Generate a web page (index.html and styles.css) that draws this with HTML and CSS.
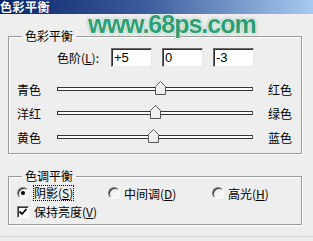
FILE: index.html
```html
<!DOCTYPE html>
<html lang="zh-CN">
<head>
    <meta charset="UTF-8">
    <title>色彩平衡</title>
    <link rel="stylesheet" href="styles.css">
</head>
<body>
    <div class="titlebar"><span class="title">色彩平衡</span></div>
    <div class="watermark">www.68ps.com</div>
    <div class="dialog">
        <fieldset class="group group-color">
            <legend>色彩平衡</legend>
            <div class="levels">
                <label>色阶(<u>L</u>):</label>
                <input class="field" type="text" value="+5">
                <input class="field" type="text" value="0">
                <input class="field" type="text" value="-3">
            </div>
            <div class="slider-row first-slider">
                <span class="side-left">青色</span>
                <div class="track"><span class="thumb" style="left: 97px"></span></div>
                <span class="side-right">红色</span>
            </div>
            <div class="slider-row">
                <span class="side-left">洋红</span>
                <div class="track"><span class="thumb" style="left: 92px"></span></div>
                <span class="side-right">绿色</span>
            </div>
            <div class="slider-row">
                <span class="side-left">黄色</span>
                <div class="track"><span class="thumb" style="left: 90px"></span></div>
                <span class="side-right">蓝色</span>
            </div>
        </fieldset>
        <fieldset class="group group-tone">
            <legend>色调平衡</legend>
            <div class="radios">
                <div class="opt"><span class="radio checked"></span><span class="focus">阴影(<u>S</u>)</span></div>
                <div class="opt"><span class="radio"></span><span>中间调(<u>D</u>)</span></div>
                <div class="opt"><span class="radio"></span><span>高光(<u>H</u>)</span></div>
            </div>
            <div class="opt check-row">
                <span class="checkbox">
                    <svg width="10" height="10" viewBox="0 0 10 10"><path d="M1.5 4.5 L4 7 L8.5 2" fill="none" stroke="#000" stroke-width="1.8"/></svg>
                </span>
                <span>保持亮度(<u>V</u>)</span>
            </div>
        </fieldset>
        <div class="bottom-edge"></div>
    </div>
</body>
</html>
```

FILE: styles.css
```css
body {
    margin: 0;
    background-color: #eeeeee;
    color: #000;
    font-family: "Noto Sans CJK SC", sans-serif;
    font-size: 12px;
    position: relative;
    width: 313px;
    height: 241px;
    overflow: hidden;
}
u {
    text-decoration: underline;
    text-underline-offset: 1px;
}
.titlebar {
    height: 14px;
    background: linear-gradient(to right, #0a246a, #3a5a9a 45%, #a6caf0);
}
.title {
    display: block;
    color: #fff;
    font-weight: bold;
    font-size: 12px;
    line-height: 14px;
    letter-spacing: 0.5px;
}
.watermark {
    position: absolute;
    top: 12px;
    left: 88px;
    font-family: "Liberation Sans", Arial, sans-serif;
    font-weight: bold;
    font-size: 25px;
    line-height: 24px;
    letter-spacing: -1px;
    color: #2f9e74;
    text-shadow: 1px 0 0 #e6f5ee, -1px 0 0 #e6f5ee, 0 1px 0 #e6f5ee, 0 -1px 0 #e6f5ee, 0 0 3px #1f7a55;
}
.dialog {
    padding: 0 11px 0 8px;
}
.group {
    margin: 0;
    padding: 0;
    border: 1px solid #9a9a9a;
    box-shadow: 1px 1px 0 #fff, inset 1px 1px 0 #fff;
    min-width: 0;
}
.group legend {
    margin-left: 13px;
    padding: 0 3px;
    line-height: 14px;
}
.group-color {
    margin-top: 15px;
    padding-bottom: 4px;
}
.group-tone {
    margin-top: 15px;
    padding-bottom: 3px;
}
.levels {
    display: flex;
    align-items: center;
    height: 19px;
    margin-top: 5px;
    padding-left: 48px;
}
.levels label {
    width: 54px;
}
.field {
    box-sizing: border-box;
    width: 41px;
    height: 19px;
    margin: 0 10px 0 0;
    padding: 0 2px;
    border: 1px solid;
    border-color: #6a6a6a #e8e8e8 #e8e8e8 #6a6a6a;
    box-shadow: inset 1px 1px 0 #303030;
    background: #fff;
    font-family: "Liberation Sans", Arial, sans-serif;
    font-size: 13px;
    color: #000;
    outline: none;
}
.slider-row {
    display: flex;
    align-items: center;
    height: 24px;
    padding-left: 8px;
}
.first-slider {
    margin-top: 10px;
}
.side-left {
    width: 40px;
}
.side-right {
    margin-left: 15px;
}
.track {
    position: relative;
    box-sizing: border-box;
    width: 196px;
    height: 4px;
    margin-top: -1px;
    border: 1px solid #333;
    border-right-color: #555;
    background: #fff;
}
.thumb {
    position: absolute;
    top: -7px;
    width: 11px;
    height: 14px;
    background: no-repeat url("data:image/svg+xml,%3Csvg xmlns='http://www.w3.org/2000/svg' width='11' height='14'%3E%3Cpath d='M0.5 13.5 V5.5 L5.5 0.5 L10.5 5.5 V13.5 Z' fill='%23eeeeee' stroke='%23555'/%3E%3Cpath d='M1.5 12.5 V5.9 L5.5 1.9' fill='none' stroke='%23fff'/%3E%3C/svg%3E");
}
.radios {
    display: grid;
    grid-template-columns: 91px 104px auto;
    height: 18px;
    margin-top: 1px;
    padding-left: 8px;
    align-items: center;
}
.opt {
    display: flex;
    align-items: center;
}
.radio {
    box-sizing: border-box;
    width: 12px;
    height: 12px;
    margin-right: 5px;
    border-radius: 50%;
    border: 1px solid;
    border-color: #7a7a7a #fff #fff #7a7a7a;
    box-shadow: inset 1px 1px 0 #333;
    background: #f4f4f4;
    position: relative;
}
.radio.checked::after {
    content: "";
    position: absolute;
    left: 3px;
    top: 3px;
    width: 4px;
    height: 4px;
    border-radius: 50%;
    background: #000;
}
.opt + .opt .radio {
    margin-right: 4px;
}
.focus {
    outline: 1px dotted #000;
    outline-offset: 0;
    line-height: 14px;
}
.check-row {
    height: 19px;
    padding-left: 8px;
}
.checkbox {
    box-sizing: border-box;
    display: flex;
    align-items: center;
    justify-content: center;
    width: 12px;
    height: 12px;
    margin-right: 5px;
    border: 1px solid;
    border-color: #7a7a7a #fff #fff #7a7a7a;
    box-shadow: inset 1px 1px 0 #333;
    background: #fff;
}
.bottom-edge {
    margin-top: 11px;
    margin-left: -8px;
    margin-right: -11px;
    border-top: 1px solid #d0d0d0;
}
```
